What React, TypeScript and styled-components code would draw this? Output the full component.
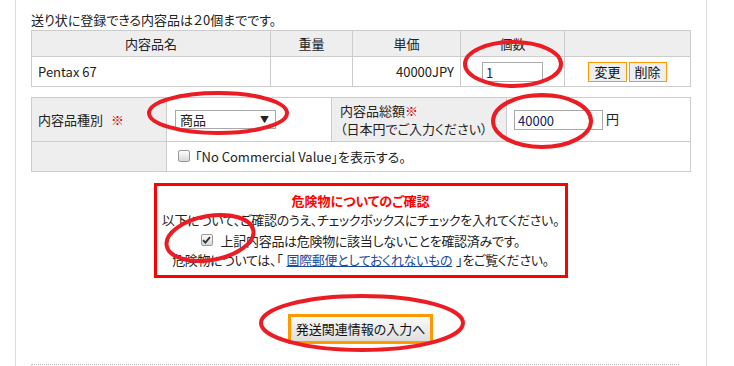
import styled, { createGlobalStyle } from 'styled-components';

const GlobalStyle = createGlobalStyle`
  html, body {
    margin: 0;
    padding: 0;
    background: #fff;
  }
  body {
    font-family: 'Noto Sans CJK JP', 'Liberation Sans', sans-serif;
    font-size: 13px;
    font-feature-settings: 'palt';
    color: #222;
  }
`;

const Page = styled.div`
  position: relative;
  margin-left: 15px;
  width: 692px;
  height: 366px;
  overflow: hidden;
  box-sizing: border-box;
  border-left: 1px solid #ddd;
  border-right: 1px solid #ddd;
  padding: 10px 16px 0 15px;
`;

const Caption = styled.div`
  height: 20px;
  line-height: 20px;
  white-space: nowrap;
`;

const Table = styled.table<{ $mt?: number }>`
  width: 659px;
  border-collapse: collapse;
  table-layout: fixed;
  margin-top: ${p => p.$mt ?? 0}px;
  font-size: 13px;

  td, th {
    border: 1px solid #ccc;
    padding: 0;
    font-weight: normal;
    white-space: nowrap;
  }
`;

const Head = styled.th`
  background: #eee;
  height: 25px;
  text-align: center;
`;

const Cell = styled.td<{ $align?: string; $gray?: boolean; $pad?: number; $h?: number }>`
  background: ${p => (p.$gray ? '#eee' : '#fff')};
  text-align: ${p => p.$align ?? 'left'};
  padding: 0 ${p => p.$pad ?? 6}px !important;
  height: ${p => p.$h ?? 29}px;
  vertical-align: middle;
`;

const TextInput = styled.div<{ $w: number }>`
  display: inline-flex;
  align-items: center;
  box-sizing: border-box;
  width: ${p => p.$w}px;
  height: 20px;
  border: 1px solid #a9a9a9;
  padding-left: 3px;
  font-size: 13px;
  color: #102060;
  background: #fff;
  vertical-align: middle;
`;

const SmallButton = styled.button`
  box-sizing: border-box;
  height: 20px;
  padding: 0 5px;
  margin: 0 1px;
  border: 1px solid #f90;
  background: #eee;
  font-family: inherit;
  font-feature-settings: 'palt';
  font-size: 13px;
  line-height: 16px;
  color: #111;
`;

const Required = styled.span<{ $gap?: number }>`
  color: #d00;
  margin-left: ${p => p.$gap ?? 0}px;
`;

const Select = styled.div`
  display: inline-flex;
  align-items: center;
  justify-content: space-between;
  box-sizing: border-box;
  width: 101px;
  height: 19px;
  margin-left: 2px;
  border: 1px solid #a9a9a9;
  padding: 0 6px 0 4px;
  font-size: 13px;
  background: #fff;
`;

const Arrow = styled.span`
  font-size: 9px;
`;

const LabelStack = styled.div`
  line-height: 18px;
  padding-left: 2px;
`;

const CheckRow = styled.label`
  display: inline-flex;
  align-items: center;
  gap: 5px;
  white-space: nowrap;
`;

const Check = styled.span`
  display: inline-flex;
  align-items: center;
  justify-content: center;
  box-sizing: border-box;
  width: 12px;
  height: 12px;
  border: 1px solid #9a9a9a;
  border-radius: 2px;
  background: linear-gradient(#fcfcfc, #d8d8d8);
`;

const Notice = styled.div`
  width: 414px;
  margin: 11px auto 0;
  box-sizing: border-box;
  border: 3px solid #f00;
  padding: 5px 0 6px;
  text-align: center;
  font-size: 13px;
  line-height: 19px;
  letter-spacing: -0.3px;
  white-space: nowrap;
`;

const NoticeTitle = styled.div`
  color: #f00;
  font-weight: bold;
  letter-spacing: 0;
`;

const Link = styled.a`
  color: #1a4c9c;
  text-decoration: underline;
  margin: 0 4px;
`;

const ButtonRow = styled.div`
  display: flex;
  justify-content: center;
  margin-top: 36px;
`;

const NextButton = styled.button`
  box-sizing: border-box;
  width: 145px;
  height: 30px;
  border: 3px solid #f90;
  background: linear-gradient(#fafafa, #dedede);
  font-family: inherit;
  font-feature-settings: 'palt';
  font-size: 13px;
  white-space: nowrap;
  color: #111;
  padding: 0;
`;

const Dotted = styled.div`
  width: 648px;
  margin-top: 20px;
  border-top: 1px dotted #bbb;
`;

const Marks = styled.svg`
  position: absolute;
  left: -16px;
  top: 0;
  pointer-events: none;
`;

const rings = [
  { cx: 513, cy: 64, rx: 48, ry: 22, r: 0 },
  { cx: 218, cy: 113, rx: 69, ry: 20, r: 0 },
  { cx: 542, cy: 121, rx: 49, ry: 26, r: 0 },
  { cx: 210, cy: 238, rx: 44, ry: 22, r: -10 },
  { cx: 362, cy: 323, rx: 101, ry: 27, r: 0 },
];

export default function App() {
  return (
    <>
      <GlobalStyle />
      <Page>
        <Caption>送り状に登録できる内容品は２0個までです。</Caption>
        <Table>
          <colgroup>
            <col style={{ width: 239 }} />
            <col style={{ width: 82 }} />
            <col style={{ width: 108 }} />
            <col style={{ width: 104 }} />
            <col style={{ width: 126 }} />
          </colgroup>
          <thead>
            <tr>
              <Head>内容品名</Head>
              <Head>重量</Head>
              <Head>単価</Head>
              <Head>個数</Head>
              <Head></Head>
            </tr>
          </thead>
          <tbody>
            <tr>
              <Cell>Pentax 67</Cell>
              <Cell></Cell>
              <Cell $align="right">40000JPY</Cell>
              <Cell $align="center">
                <TextInput $w={61}>1</TextInput>
              </Cell>
              <Cell $align="center">
                <SmallButton>変更</SmallButton>
                <SmallButton>削除</SmallButton>
              </Cell>
            </tr>
          </tbody>
        </Table>

        <Table $mt={10}>
          <colgroup>
            <col style={{ width: 135 }} />
            <col style={{ width: 165 }} />
            <col style={{ width: 175 }} />
            <col style={{ width: 184 }} />
          </colgroup>
          <tbody>
            <tr>
              <Cell $gray $h={43}>
                内容品種別<Required $gap={8}>※</Required>
              </Cell>
              <Cell>
                <Select>
                  商品<Arrow>▼</Arrow>
                </Select>
              </Cell>
              <Cell $gray>
                <LabelStack>
                  内容品総額<Required>※</Required>
                  <br />
                  （日本円でご入力ください）
                </LabelStack>
              </Cell>
              <Cell>
                <TextInput $w={89} style={{ marginLeft: 1 }}>40000</TextInput> 円
              </Cell>
            </tr>
            <tr>
              <Cell $gray $h={28}></Cell>
              <Cell colSpan={3} $pad={11}>
                <CheckRow>
                  <Check />
                  「No Commercial Value」を表示する。
                </CheckRow>
              </Cell>
            </tr>
          </tbody>
        </Table>

        <Notice>
          <NoticeTitle>危険物についてのご確認</NoticeTitle>
          <div>以下について、ご確認のうえ、チェックボックスにチェックを入れてください。</div>
          <CheckRow>
            <Check>
              <svg width="9" height="8" viewBox="0 0 9 8">
                <path d="M1 4.2 L3.4 6.6 L8 1.2" fill="none" stroke="#333" strokeWidth="1.8" />
              </svg>
            </Check>
            &nbsp;上記内容品は危険物に該当しないことを確認済みです。
          </CheckRow>
          <div>
            危険物については、「<Link>国際郵便としておくれないもの</Link>」をご覧ください。
          </div>
        </Notice>

        <ButtonRow>
          <NextButton>発送関連情報の入力へ</NextButton>
        </ButtonRow>

        <Dotted />

        <Marks width={734} height={366} viewBox="0 0 734 366">
          {rings.map((e, i) => (
            <ellipse
              key={i}
              cx={e.cx}
              cy={e.cy}
              rx={e.rx}
              ry={e.ry}
              fill="none"
              stroke="#ec1c24"
              strokeWidth={4}
              transform={`rotate(${e.r} ${e.cx} ${e.cy})`}
            />
          ))}
        </Marks>
      </Page>
    </>
  );
}
